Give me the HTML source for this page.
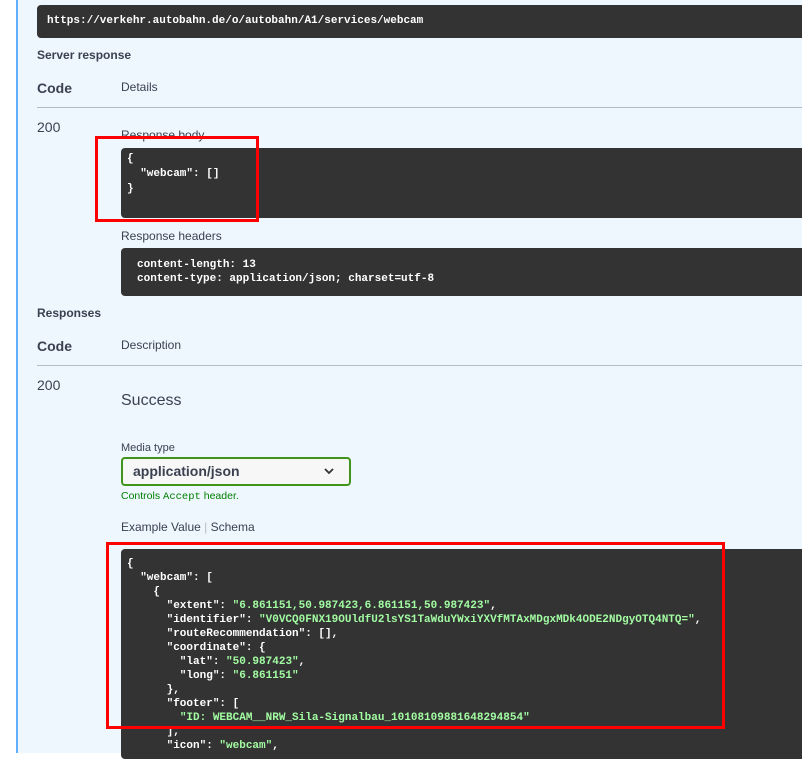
<!DOCTYPE html>
<html><head><style>
body{margin:0;width:802px;height:753px;overflow:hidden;background:#fff;position:relative;font-family:"Liberation Sans",sans-serif;color:#3b4151}
.bg{position:absolute;left:16px;top:0;width:786px;height:753px;background:#eef6fe;border-left:2px solid #61affe}
.a{position:absolute;white-space:pre}
.dark{position:absolute;background:#333;border-radius:4px}
.mono{font-family:"Liberation Mono",monospace;font-size:11px;font-weight:bold;color:#fff;line-height:14px}
.s{color:#a2fca2}
.hr{position:absolute;left:37px;width:765px;height:1px;background:#b4bcc8}
.red{position:absolute;border:3px solid #f00;box-sizing:border-box}
.lbl{font-size:12px;font-weight:bold}
.h{font-size:14px;font-weight:bold}
.d{font-size:12px}
</style></head><body>
<div class="bg"></div>
<div class="dark" style="left:37px;top:5px;width:775px;height:33px"></div>
<div class="a mono" style="left:47px;top:14px">https://verkehr.autobahn.de/o/autobahn/A1/services/webcam</div>
<div class="a lbl" style="left:37px;top:48px;font-weight:bold;color:#3b4151">Server response</div>
<div class="a h" style="left:37px;top:80px">Code</div>
<div class="a d" style="left:121px;top:80px">Details</div>
<div class="hr" style="top:107px"></div>
<div class="a" style="left:37px;top:119px;font-size:14px">200</div>
<div class="a d" style="left:121px;top:128px">Response body</div>
<div class="dark" style="left:121px;top:148px;width:690px;height:70px"></div>
<div class="a mono" style="left:127px;top:152px;line-height:15px">{
  "webcam": []
}</div>
<div class="a d" style="left:121px;top:229px">Response headers</div>
<div class="dark" style="left:121px;top:248px;width:690px;height:48px"></div>
<div class="a mono" style="left:137px;top:258px">content-length: 13
content-type: application/json; charset=utf-8</div>
<div class="a lbl" style="left:37px;top:306px">Responses</div>
<div class="a h" style="left:37px;top:338px">Code</div>
<div class="a d" style="left:121px;top:338px">Description</div>
<div class="hr" style="top:365px"></div>
<div class="a" style="left:37px;top:377px;font-size:14px">200</div>
<div class="a" style="left:121px;top:392px;font-size:16px">Success</div>
<div class="a" style="left:121px;top:442px;font-size:11px">Media type</div>
<div style="position:absolute;left:121px;top:457px;width:230px;height:29px;box-sizing:border-box;border:2px solid #41941a;border-radius:4px;background:#f7f7f7"></div>
<div class="a" style="left:133px;top:463px;font-size:14px;font-weight:bold">application/json</div>
<svg style="position:absolute;left:323px;top:466px" width="12" height="10"><path d="M2 3l4 4 4-4" stroke="#333" stroke-width="1.8" fill="none"/></svg>
<div class="a" style="left:121px;top:490px;font-size:10.5px;color:#008000">Controls <span style="font-family:'Liberation Mono',monospace">Accept</span> header.</div>
<div class="a" style="left:121px;top:520px;font-size:12px">Example Value <span style="color:#bbb">|</span> <span style="font-weight:normal">Schema</span></div>
<div class="dark" style="left:121px;top:549px;width:690px;height:210px"></div>
<div class="a mono" style="left:127px;top:557px">{
  "webcam": [
    {
      "extent": <span class="s">"6.861151,50.987423,6.861151,50.987423"</span>,
      "identifier": <span class="s">"V0VCQ0FNX19OUldfU2lsYS1TaWduYWxiYXVfMTAxMDgxMDk4ODE2NDgyOTQ4NTQ="</span>,
      "routeRecommendation": [],
      "coordinate": {
        "lat": <span class="s">"50.987423"</span>,
        "long": <span class="s">"6.861151"</span>
      },
      "footer": [
        <span class="s">"ID: WEBCAM__NRW_Sila-Signalbau_10108109881648294854"</span>
      ],
      "icon": <span class="s">"webcam"</span>,</div>
<div class="red" style="left:95px;top:136px;width:164px;height:86px"></div>
<div class="red" style="left:106px;top:542px;width:619px;height:187px"></div>
</body></html>
